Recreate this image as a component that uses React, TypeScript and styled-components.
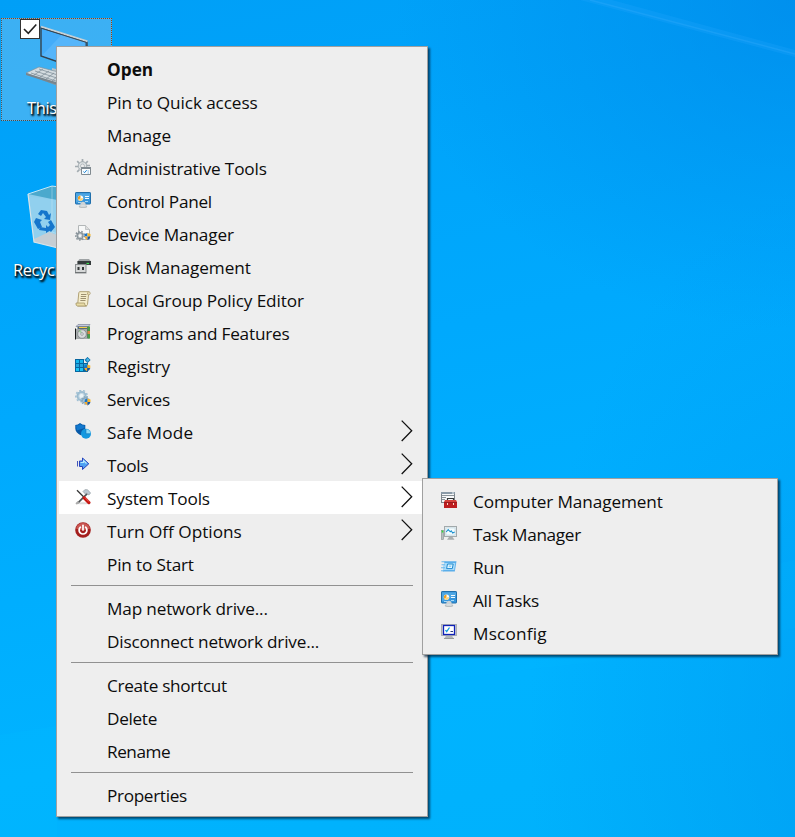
import React from 'react';
import styled, { createGlobalStyle, css } from 'styled-components';

const GlobalStyle = createGlobalStyle`
  *, *::before, *::after { box-sizing: border-box; }
  html, body { margin: 0; padding: 0; overflow: hidden; }
`;

const Desktop = styled.main`
  position: relative;
  width: 795px;
  height: 837px;
  overflow: hidden;
  font-family: 'Open Sans', 'Noto Sans', sans-serif;
  background:
    radial-gradient(ellipse 400px 330px at 100% 0%, rgba(0, 132, 230, 0.6), rgba(0, 140, 240, 0) 100%),
    radial-gradient(ellipse 330px 560px at 108% 88%, rgba(0, 146, 238, 0.5), rgba(0, 150, 240, 0) 100%),
    linear-gradient(168deg, #009ff7 0%, #00a9fd 42%, #00b3ff 78%, #00b1fb 100%);
`;

const Rays = styled.svg`
  position: absolute;
  inset: 0;
`;

const selectedLook = css`
  background:
    repeating-linear-gradient(90deg, #97430f 0 1px, #62aede 1px 2px) 0 0 / 100% 1px no-repeat,
    repeating-linear-gradient(90deg, #4a4a45 0 1px, #62aede 1px 2px) 0 100% / 100% 1px no-repeat,
    repeating-linear-gradient(180deg, #4a5a62 0 1px, #62aede 1px 2px) 0 0 / 1px 100% no-repeat,
    repeating-linear-gradient(180deg, #97430f 0 1px, #62aede 1px 2px) 100% 0 / 1px 100% no-repeat,
    rgba(110, 190, 240, 0.54);
`;

const Shortcut = styled.div<{ $x: number; $y: number; $selected?: boolean }>`
  position: absolute;
  left: ${(p) => p.$x}px;
  top: ${(p) => p.$y}px;
  width: 111px;
  height: 103px;
  padding: 1px;
  display: flex;
  flex-direction: column;
  justify-content: space-between;
  ${(p) => p.$selected && selectedLook}
`;

const ShortcutLabel = styled.span<{ $indent: number }>`
  padding-left: ${(p) => p.$indent}px;
  color: #fff;
  font-size: 16.4px;
  line-height: 25px;
  letter-spacing: -0.35px;
  white-space: nowrap;
  text-shadow: 1px 1px 2px #000, 1px 2px 2px rgba(0, 0, 0, 0.85), 2px 2px 2px rgba(0, 0, 0, 0.5);
`;

const CheckBox = styled.span`
  position: absolute;
  left: 19px;
  top: 1px;
  width: 20px;
  height: 20px;
  border: 1px solid #333;
  background: #fff;
  display: flex;
`;

const Menu = styled.ul<{ $x: number; $y: number; $width: number }>`
  position: absolute;
  left: ${(p) => p.$x}px;
  top: ${(p) => p.$y}px;
  width: ${(p) => p.$width}px;
  margin: 0;
  padding: 5px 2px;
  list-style: none;
  background: #eee;
  border: 1px solid #a0a0a0;
  box-shadow: 2px 2px 2px rgba(0, 30, 55, 0.7);
`;

const Row = styled.li<{ $active?: boolean }>`
  display: grid;
  grid-template-columns: 16px 1fr 12px;
  column-gap: 16px;
  align-items: start;
  height: 33px;
  padding: 0 12px 0 16px;
  background: ${(p) => (p.$active ? '#fff' : 'transparent')};
`;

const IconSlot = styled.span`
  display: flex;
  width: 16px;
  height: 16px;
  margin-top: 8px;
`;

const Label = styled.span<{ $tracking: number; $bold?: boolean }>`
  margin-top: 6px;
  color: #0c0c0c;
  font-size: 17.2px;
  line-height: 24px;
  font-weight: ${(p) => (p.$bold ? 700 : 400)};
  letter-spacing: ${(p) => p.$tracking - 0.05}px;
  white-space: nowrap;
`;

const Chevron = styled.svg`
  margin-top: 5px;
`;

const Separator = styled.li`
  height: 1px;
  margin: 5px 12px;
  background: #919191;
`;

const Icon = ({ children }: { children: React.ReactNode }) => (
  <svg width="16" height="16" viewBox="0 0 16 16">{children}</svg>
);

const MiniShield = ({ x, y }: { x: number; y: number }) => (
  <g transform={`translate(${x} ${y})`}>
    <path d="M0 1 3 0V3.5H0Z" fill="#1976c9" />
    <path d="M3 0 6 1V3.5H3Z" fill="#f7b52b" />
    <path d="M0 3.5H3V7Q.5 6 0 3.5Z" fill="#f7a928" />
    <path d="M3 3.5H6Q5.500 6 3 7Z" fill="#17559f" />
  </g>
);

const Gear = ({ cx, cy, r, color, hole }: { cx: number; cy: number; r: number; color: string; hole: string }) => (
  <g fill="none" stroke={color}>
    <circle cx={cx} cy={cy} r={r} strokeWidth="1.5" strokeDasharray={`${(r * Math.PI) / 9} ${(r * Math.PI) / 9}`} />
    <circle cx={cx} cy={cy} r={r * 0.68} strokeWidth={r * 0.34} />
    <circle cx={cx} cy={cy} r={r * 0.45} fill={hole} strokeWidth=".5" />
  </g>
);

const AdminIcon = () => (
  <Icon>
    <g stroke="#a3abb0" strokeWidth="1.700">
      <path d="M7.500 0V3M7.500 10V14M0 7.500H3M11 6.500H15M2.200 2.200 4.500 4.500M12.800 2.200 10.500 4.500M2.200 12.800 4.500 10.500" />
    </g>
    <circle cx="7.500" cy="7" r="4.300" fill="#dde1e2" stroke="#a3acb1" />
    <circle cx="7.500" cy="7" r="2" fill="#eee" stroke="#a2abb0" strokeWidth=".7" />
    <path d="M6.500 8.500H15.500V15.500H6.500Z" fill="#f8fbfd" stroke="#808a90" />
    <path d="M6 8H16V10H6Z" fill="#818b92" />
    <path d="m8.500 12.500 1 1.200 2.200-2.500" fill="none" stroke="#1684d8" />
    <path d="M12.500 12H14M12.500 14H14" stroke="#6aaede" strokeWidth=".8" />
  </Icon>
);

const ControlPanelIcon = () => (
  <Icon>
    <g transform="translate(0 .5)">
      <rect x=".5" y="0" width="15" height="11.500" rx=".6" fill="#3695dc" stroke="#216fab" />
      <path d="M1 1H15V4L1 10Z" fill="#63b5ea" opacity=".55" />
      <circle cx="5.500" cy="5.700" r="2.700" fill="#f9fcff" />
      <path d="M5.500 5.700V3A2.700 2.700 0 0 0 3.500 7.500Z" fill="#f2a020" />
      <path d="M5.500 5.700 3.500 7.500A2.700 2.700 0 0 0 8.200 5.700Z" fill="#fbd27a" />
      <path d="M10 4H14M10 6H14" stroke="#f0faff" />
      <path d="M3 10H6M10 9H13" stroke="#a8daf6" />
      <circle cx="8" cy="11.800" r="2.600" fill="#cdd3d6" />
      <ellipse cx="8" cy="14" rx="4.200" ry="1.500" fill="#b9bfc1" />
      <ellipse cx="8" cy="13.400" rx="3" ry=".9" fill="#dde1e2" />
    </g>
  </Icon>
);

const DeviceIcon = () => (
  <Icon>
    <path d="M3.500.5H10.500L14.500 4.500V14.500H3.500Z" fill="#f7f8f8" stroke="#b2b6b7" />
    <path d="M10.500.5V4.500H14.500" fill="#ddd" stroke="#b2b6b7" strokeWidth=".7" />
    <Gear cx={5} cy={10.7} r={4.3} color="#89949b" hole="#f3f4f4" />
    <MiniShield x={9.5} y={8} />
  </Icon>
);

const DiskIcon = () => (
  <Icon>
    <path d="M4.500 1H14L16 3.500V6H2.500V3.500Z" fill="#9fa3a5" />
    <path d="M2.500 3H16V7H2.500Z" fill="#343a3b" />
    <path d="M11.500 5.500H14" stroke="#40df53" strokeWidth="1.200" />
    <rect x=".5" y="6.500" width="10.500" height="8.500" fill="#d6d8d8" stroke="#8b8f91" />
    <path d="M0 14.500H11" stroke="#6f7375" />
    <path d="M2.500 9H4.500V12H2.500ZM7 9H9V12H7Z" fill="#343839" />
  </Icon>
);

const PolicyIcon = () => (
  <Icon>
    <path d="M4.500.7H14C15.800 1 15.500 4 13.500 4L12.500 13.500Q12 15 10.500 15H2.500L3.800 1.800Z" fill="#f5edcb" stroke="#b1a276" />
    <path d="M1 12H9.500Q9.500 15.200 11.500 15H2.500Q.5 14.800 1 12Z" fill="#e8dba5" stroke="#a69868" strokeWidth=".8" />
    <path d="M6 3.500H11.500M5.800 5.500H11.200M5.500 7.500H11M5.300 9.500H10.500" stroke="#938664" strokeWidth=".9" />
    <path d="M13 1.200Q12 3.500 13.500 4" fill="none" stroke="#b19c66" />
  </Icon>
);

const ProgramsIcon = () => (
  <Icon>
    <path d="M1 2.500 3 .5H15L13.500 2.500Z" fill="#c5c9dd" stroke="#7d8599" strokeWidth=".7" />
    <path d="M2.500 2.500H14.500V14.500H2.500Z" fill="#566a76" />
    <path d="M12.500 2.500H15V14.500H12.500Z" fill="#4a9c45" />
    <path d="M12.500 7H15V10H12.500Z" fill="#dd8544" />
    <path d="M4 3.500H12" stroke="#f1ce4b" />
    <path d="M1 5H12V15H1Z" fill="#a5aaab" />
    <path d="M.5 4.500V15.500" stroke="#171b1d" />
    <circle cx="7" cy="10" r="4.300" fill="#d9dcdd" stroke="#777e81" strokeWidth=".7" />
    <path d="M7 10 3.700 7.500A4 4 0 0 1 6 6Z" fill="#9ccf9d" />
    <circle cx="7" cy="10" r="1.300" fill="#f4f4f4" stroke="#7d8588" strokeWidth=".7" />
  </Icon>
);

const RegistryIcon = () => (
  <Icon>
    <path d="M0 2H9V6H13V15H0Z" fill="#07669f" />
    <path d="M1 3H4V6H1ZM5 3H8V6H5Z" fill="#14b6ee" />
    <path d="M1 7H4V10H1ZM5 7H8V10H5ZM9 7H12V10H9Z" fill="#24a5dc" />
    <path d="M1 11H4V14H1ZM5 11H8V14H5Z" fill="#1ac2f4" />
    <path d="m12.500 .3 2.700 2.700-2.700 2.700-2.700-2.700Z" fill="#249ad4" stroke="#07669f" strokeWidth=".8" />
    <path d="m12.500 1.500 1.500 1.500-1.500 1Z" fill="#74d5f7" />
    <MiniShield x={9.3} y={7.5} />
  </Icon>
);

const ServicesIcon = () => (
  <Icon>
    <Gear cx={6.5} cy={6} r={5.7} color="#9ebfd3" hole="#eaf4f8" />
    <circle cx="6.500" cy="6" r="4.600" fill="none" stroke="#8aaec6" strokeWidth=".5" />
    <Gear cx={10.2} cy={10.5} r={3.7} color="#87a6bb" hole="#eaf4f8" />
    <MiniShield x={9.5} y={8.5} />
  </Icon>
);

const SafeIcon = () => (
  <Icon>
    <path d="M.3 2Q3 2 5 0Q7 2 10.300 2V5.500Q10 10 5.500 12.300Q.5 9.500.3 5.500Z" fill="#0759a7" />
    <path d="M1 2.500Q3.500 2.500 5 1.200Q7 2.500 9.500 2.600V5L1.800 7.500Z" fill="#1178ce" />
    <circle cx="11" cy="10.700" r="5" fill="#1398df" />
    <path d="M11 10.700V6.200A4.500 4.500 0 0 1 15.500 10.700Z" fill="#8adbf8" />
    <path d="M11 6.200V10.700H15.500" fill="none" stroke="#1374b8" strokeWidth=".6" />
  </Icon>
);

const ToolsIcon = () => (
  <Icon>
    <path d="M7.500 2V5H4.500V10.500H7.500V13.500L13.800 7.800Z" fill="#4fa2f2" stroke="#2742bc" strokeLinejoin="round" />
    <path d="M2.500 5V10.500" stroke="#4054bc" />
    <path d="M5.500 6.500H8.500V4.500L11.500 7.500" fill="none" stroke="#b8eaff" strokeWidth="1.100" />
  </Icon>
);

const SystemToolsIcon = () => (
  <Icon>
    <ellipse cx="8" cy="14.300" rx="7.500" ry="1" fill="#dcdcdc" />
    <path d="M2 1.200 10 9.300" stroke="#333" strokeWidth="1.300" />
    <path d="M12.200 4.700 3 13.800" stroke="#4f5355" strokeWidth="1.700" />
    <path d="M3.500 12.800 1.200 15" stroke="#aaa" strokeWidth="2" />
    <path d="M8 2.500 9.800.7H12.500L15.600 4 13.800 6 11.700 4 10.500 5.200Z" fill="#bcc8d2" stroke="#879299" strokeWidth=".6" />
    <path d="m9.200 8.800 4.700 4.800" stroke="#c71914" strokeWidth="3.200" strokeLinecap="round" />
    <path d="m10 8.500 3.800 4" stroke="#fb7162" strokeWidth=".8" />
  </Icon>
);

const PowerIcon = () => (
  <Icon>
    <circle cx="8" cy="8" r="7.800" fill="#a41e1d" />
    <path d="M1 6.500A7.200 7.200 0 0 1 15 6.500Q8 10 1 6.500Z" fill="#d66a64" opacity=".75" />
    <path d="M5.400 5.200A3.900 3.900 0 1 0 10.600 5.200" fill="none" stroke="#fff" strokeWidth="1.700" strokeLinecap="round" />
    <path d="M8 3.300V8" stroke="#fff" strokeWidth="1.700" strokeLinecap="round" />
  </Icon>
);

const ComputerManagementIcon = () => (
  <Icon>
    <rect x=".5" y=".5" width="13" height="10" fill="#f6f7f8" stroke="#7d858a" />
    <path d="M0 0H14V2H0Z" fill="#8a9aa7" />
    <path d="M1 3.500H13M1 5.500H5M1 7.500H4" stroke="#8b949a" />
    <path d="M11 1H13" stroke="#e6edf1" />
    <path d="M6.500 9V6.500H12.500V9" fill="none" stroke="#353737" strokeWidth="1.200" />
    <path d="M4 8H15L16 10V12H3V10Z" fill="#d6403a" />
    <rect x="3" y="10" width="13" height="6" fill="#bd1d20" />
    <path d="M3 10.500H16" stroke="#9a191d" />
    <path d="M6.500 11V13M12.500 11V13" stroke="#f6d7c6" />
  </Icon>
);

const TaskManagerIcon = () => (
  <Icon>
    <rect x=".5" y="5.500" width="2" height="9" fill="#b6bfbf" stroke="#858d8e" strokeWidth=".6" />
    <path d="M1.500 5.500V7.500" stroke="#35dc38" strokeWidth="1.500" />
    <path d="M8 12H11.500L13.500 14.700H6Z" fill="#a8adae" />
    <rect x="3.500" y="1.500" width="12" height="10" fill="#e3ecef" stroke="#a2a9ab" />
    <rect x="5" y="3" width="9" height="7" fill="#f4fdff" stroke="#bed4de" strokeWidth=".6" />
    <path d="m5.200 7 2-2.500 2 2.300 1-1 1.500 2.200 2-1" fill="none" stroke="#188fce" strokeWidth="1.100" />
  </Icon>
);

const RunIcon = () => (
  <Icon>
    <g transform="translate(0 .8)">
      <path d="M3.500 2.500H15.500L13.800 12.700H1.800Z" fill="#5aaeea" />
      <path d="M3.200 4.200H14.300L13.200 11.200H2Z" fill="#a9dbfa" />
      <path d="M6.500 5.200H12.200L11.300 9.800H5.600Z" fill="#e1f6ff" stroke="#218bd0" />
      <path d="M.5 3H4.500M.5 6H4M0 9H4M0 12H3" stroke="#6bb9ed" strokeWidth="1.100" />
      <path d="M8 6.800H10.500L10 8.300H7.700" fill="#8fcdf3" />
    </g>
  </Icon>
);

const MsconfigIcon = () => (
  <Icon>
    <path d="M5.500 11H10.500L13 15H3Z" fill="#b4b7b8" />
    <rect x=".5" y=".5" width="15" height="11" fill="#d0d2d4" stroke="#adb0b3" />
    <rect x="2.500" y="1.500" width="11" height="9" fill="#fff" stroke="#1021b8" strokeWidth="1.300" />
    <path d="m4.500 6 1.200 1.700 2.800-4.200" fill="none" stroke="#149cdd" strokeWidth="1.300" />
    <path d="M9.500 7.500H12" stroke="#2b3b80" />
    <path d="M3 14.500H13" stroke="#979b9c" />
  </Icon>
);

type Entry =
  | 'separator'
  | { text: string; tracking: number; icon?: React.ComponentType; bold?: boolean; sub?: boolean; active?: boolean };

const mainEntries: Entry[] = [
  { text: 'Open', tracking: 0.1, bold: true },
  { text: 'Pin to Quick access', tracking: -0.06 },
  { text: 'Manage', tracking: 0.04 },
  { text: 'Administrative Tools', tracking: -0.13, icon: AdminIcon },
  { text: 'Control Panel', tracking: -0.22, icon: ControlPanelIcon },
  { text: 'Device Manager', tracking: -0.06, icon: DeviceIcon },
  { text: 'Disk Management', tracking: -0.02, icon: DiskIcon },
  { text: 'Local Group Policy Editor', tracking: -0.07, icon: PolicyIcon },
  { text: 'Programs and Features', tracking: -0.16, icon: ProgramsIcon },
  { text: 'Registry', tracking: -0.06, icon: RegistryIcon },
  { text: 'Services', tracking: -0.23, icon: ServicesIcon },
  { text: 'Safe Mode', tracking: 0.2, icon: SafeIcon, sub: true },
  { text: 'Tools', tracking: -0.28, icon: ToolsIcon, sub: true },
  { text: 'System Tools', tracking: -0.14, icon: SystemToolsIcon, sub: true, active: true },
  { text: 'Turn Off Options', tracking: 0.04, icon: PowerIcon, sub: true },
  { text: 'Pin to Start', tracking: -0.12 },
  'separator',
  { text: 'Map network drive...', tracking: -0.12 },
  { text: 'Disconnect network drive...', tracking: -0.14 },
  'separator',
  { text: 'Create shortcut', tracking: -0.25 },
  { text: 'Delete', tracking: -0.27 },
  { text: 'Rename', tracking: -0.42 },
  'separator',
  { text: 'Properties', tracking: -0.29 },
];

const systemEntries: Entry[] = [
  { text: 'Computer Management', tracking: -0.05, icon: ComputerManagementIcon },
  { text: 'Task Manager', tracking: -0.28, icon: TaskManagerIcon },
  { text: 'Run', tracking: 0, icon: RunIcon },
  { text: 'All Tasks', tracking: -0.24, icon: ControlPanelIcon },
  { text: 'Msconfig', tracking: 0.25, icon: MsconfigIcon },
];

const ContextMenu = ({ entries, x, y, width }: { entries: Entry[]; x: number; y: number; width: number }) => (
  <Menu $x={x} $y={y} $width={width} role="menu">
    {entries.map((entry, i) => {
      if (entry === 'separator') return <Separator key={i} role="separator" />;
      const Glyph = entry.icon;
      return (
        <Row key={i} $active={entry.active} role="menuitem">
          <IconSlot>{Glyph && <Glyph />}</IconSlot>
          <Label $tracking={entry.tracking} $bold={entry.bold}>{entry.text}</Label>
          {entry.sub && (
            <Chevron width="12" height="22" viewBox="0 0 12 22">
              <path d="M.7.6 10.700 10.800 .7 21" fill="none" stroke="#111" strokeWidth="1.300" />
            </Chevron>
          )}
        </Row>
      );
    })}
  </Menu>
);

const ComputerArt = () => (
  <svg width="109" height="76" viewBox="2 19 109 76">
    <path d="M52 68 64 71 72 74 52 76Z" fill="#b9c3c9" />
    <path d="M41 27.500 87 42V72L41 56Z" fill="#43acf9" stroke="#34424d" strokeWidth="1.400" />
    <path d="M42 55.500 62 34.500 86 42V70Z" fill="#6cc1fb" opacity=".45" />
    <path d="M41 26.700 87.500 41.300" stroke="#c8d0d4" strokeWidth="1.800" />
    <path d="M41.500 28.300 86 42.300V47" fill="none" stroke="#34424d" strokeWidth=".9" />
    <path d="m26 73 13-6 35 9-8 13Z" fill="#d4dce0" stroke="#7e929e" strokeWidth=".7" />
    <path d="m26 73 40 12v3L26 75Z" fill="#77858e" />
    <path d="m31 73 28 9M35 71l28 9M39 69l28 9M34 75l9-6M40 77l9-6M46 79l8-6M52 81l7-6" stroke="#82919b" strokeWidth=".8" />
  </svg>
);

const BinArt = () => (
  <svg width="109" height="76" viewBox="2 180 109 76">
    <path d="M28 193 52 185 85 190 78 252 34 241Z" fill="#86cbed" opacity=".9" />
    <path d="M28 193 52 185 66 188V200L31 196Z" fill="#4ba9cd" />
    <path d="M28 193 66 201V248L34 241Z" fill="#94d0ee" opacity=".92" />
    <path d="M52 185V231L34 241M52 231 66 236" fill="none" stroke="#d5edf6" strokeWidth=".8" opacity=".5" />
    <path d="M34 238 49 231 66 237V249L34 241Z" fill="#c5ced4" />
    <path d="M28 193 34 241 66 249" fill="none" stroke="#d8e4e9" strokeWidth="1.200" />
    <path d="M28 193 52 185 66 187" fill="none" stroke="#e3f4fa" strokeWidth=".8" />
    <g fill="#1576cc">
      <path d="m38 213 3-4 6 1 2 4 2-2-1 7-6-1 2-2-3-4-2 3Z" />
      <path d="m36 217 6 2-2 2 2 5-4 2-4-7Z" />
      <path d="m40 226 6 1v-3l5 5-5 3v-2l-7-1Z" />
      <path d="m51 219 4 7-4 5-4-4 3-3-2-3Z" />
    </g>
  </svg>
);

export default function App() {
  return (
    <>
      <GlobalStyle />
      <Desktop>
        <Rays width="795" height="837" viewBox="0 0 795 837">
          <path d="M580 0 795 57V50L612 0Z" fill="#29a9ff" opacity=".22" />
          <path d="M590 0 795 54" stroke="#42b2ff" strokeWidth="1.500" opacity=".25" />
          <path d="M428 681 620 659 795 628V560L428 640Z" fill="#00c0ff" opacity=".12" />
          <path d="M0 735 57 726V837H0Z" fill="#00bdff" opacity=".2" />
        </Rays>
        <Shortcut $x={1} $y={18} $selected>
          <ComputerArt />
          <ShortcutLabel $indent={25}>This PC</ShortcutLabel>
          <CheckBox>
            <svg width="18" height="18" viewBox="0 0 18 18">
              <path d="m3 9 4.300 4.300 8-8.800" fill="none" stroke="#222" strokeWidth="1.600" />
            </svg>
          </CheckBox>
        </Shortcut>
        <Shortcut $x={1} $y={180}>
          <BinArt />
          <ShortcutLabel $indent={11}>Recycle Bin</ShortcutLabel>
        </Shortcut>
        <ContextMenu entries={mainEntries} x={56} y={46} width={372} />
        <ContextMenu entries={systemEntries} x={422} y={478} width={356} />
      </Desktop>
    </>
  );
}
